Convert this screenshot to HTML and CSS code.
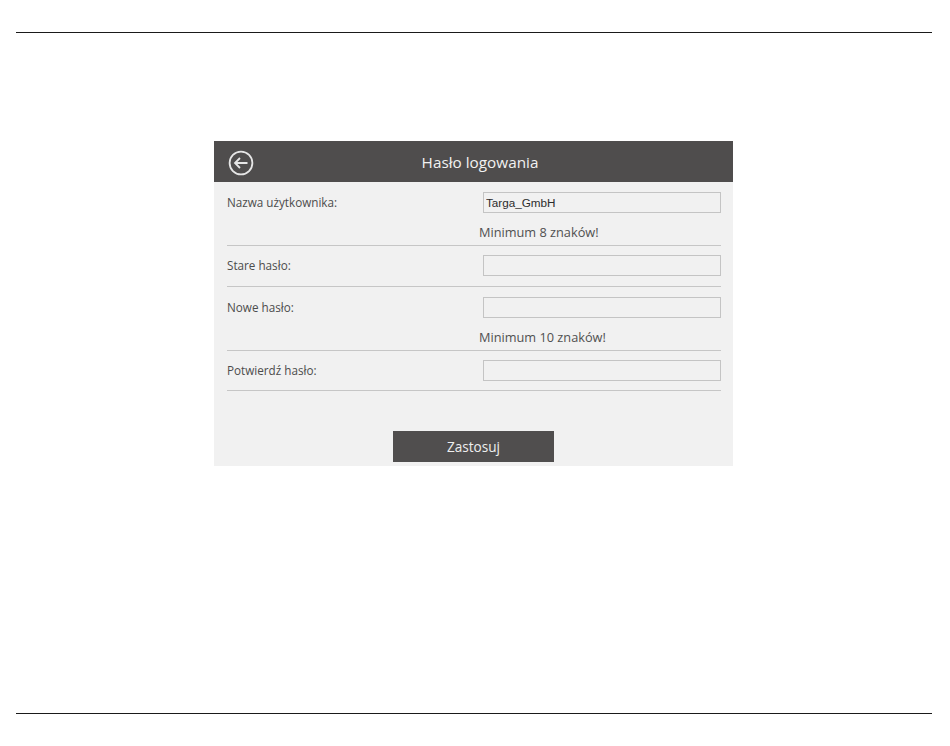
FILE: index.html
```html
<!DOCTYPE html>
<html lang="pl">
<head>
<meta charset="utf-8">
<title>Hasło logowania</title>
<link rel="stylesheet" href="styles.css">
</head>
<body>
<div class="page">
  <hr class="rule">
  <main class="panel">
    <header class="head">
      <svg class="back" viewBox="0 0 26 26" aria-hidden="true">
        <circle cx="13" cy="13" r="11.4"/>
        <path d="M19.5 13H7M12 8l-5 5 5 5"/>
      </svg>
      <h1 class="title">Hasło logowania</h1>
    </header>
    <form class="form">
      <div class="row row-a">
        <label class="label">Nazwa użytkownika:</label>
        <input class="field" type="text" value="Targa_GmbH">
        <p class="hint">Minimum 8 znaków!</p>
      </div>
      <div class="row row-b">
        <label class="label">Stare hasło:</label>
        <input class="field" type="text">
      </div>
      <div class="row row-c">
        <label class="label">Nowe hasło:</label>
        <input class="field" type="text">
        <p class="hint">Minimum 10 znaków!</p>
      </div>
      <div class="row row-d">
        <label class="label">Potwierdź hasło:</label>
        <input class="field" type="text">
      </div>
      <div class="actions">
        <button class="apply" type="button">Zastosuj</button>
      </div>
    </form>
  </main>
  <hr class="rule rule-end">
</div>
</body>
</html>
```
FILE: styles.css
```css
html, body {
  margin: 0;
  padding: 0;
  background: #fff;
}
.page {
  display: flex;
  flex-direction: column;
  height: 746px;
  padding: 32px 18px 0 16px;
  box-sizing: border-box;
  font-family: "Open Sans", "Noto Sans", sans-serif;
}
.rule {
  width: 100%;
  height: 1px;
  margin: 0;
  border: 0;
  background: #1a1a1a;
  flex: none;
}
.rule-end {
  margin-top: 247px;
}
.panel {
  width: 519px;
  height: 325px;
  margin: 108px 0 0 198px;
  background: #f1f1f1;
  flex: none;
}
.head {
  position: relative;
  display: flex;
  align-items: center;
  justify-content: center;
  height: 41px;
  background: #4f4d4d;
}
.back {
  position: absolute;
  left: 14px;
  top: 9px;
  width: 26px;
  height: 26px;
  fill: none;
  stroke: #e6e6e6;
  stroke-width: 1.8;
}
.title {
  margin: 2px 0 0 13px;
  color: #f2f2f2;
  font-size: 15.3px;
  font-weight: 400;
  line-height: 39px;
}
.form {
  display: flex;
  flex-direction: column;
  padding: 0 12px 0 13px;
}
.row {
  display: grid;
  grid-template-columns: 256px 238px;
  border-bottom: 1px solid #c6c6c6;
  align-items: center;
}
.row-a { padding-top: 10px; }
.row-b { padding: 9px 0 10px; }
.row-c { padding-top: 10px; }
.row-d { padding: 9px 0; }
.label {
  color: #4c4c4c;
  font-size: 11.7px;
  line-height: 21px;
}
.field {
  width: 238px;
  height: 21px;
  margin: 0;
  padding: 0 2px;
  box-sizing: border-box;
  border: 1px solid #c4c4c4;
  border-radius: 0;
  background: #f1f1f1;
  color: #2c2c2c;
  font-family: "Liberation Sans", Arial, sans-serif;
  font-size: 11.7px;
  outline: none;
}
.hint {
  grid-column: 2;
  margin: 0 0 0 -4px;
  padding-top: 6px;
  color: #505050;
  font-size: 12.75px;
  line-height: 26px;
  height: 26px;
}
.actions {
  display: flex;
  padding: 40px 0 0 166px;
}
.apply {
  width: 161px;
  height: 31px;
  padding: 0;
  border: 0;
  background: #504e4e;
  color: #eeeeee;
  font-family: inherit;
  font-size: 13.6px;
}
```
